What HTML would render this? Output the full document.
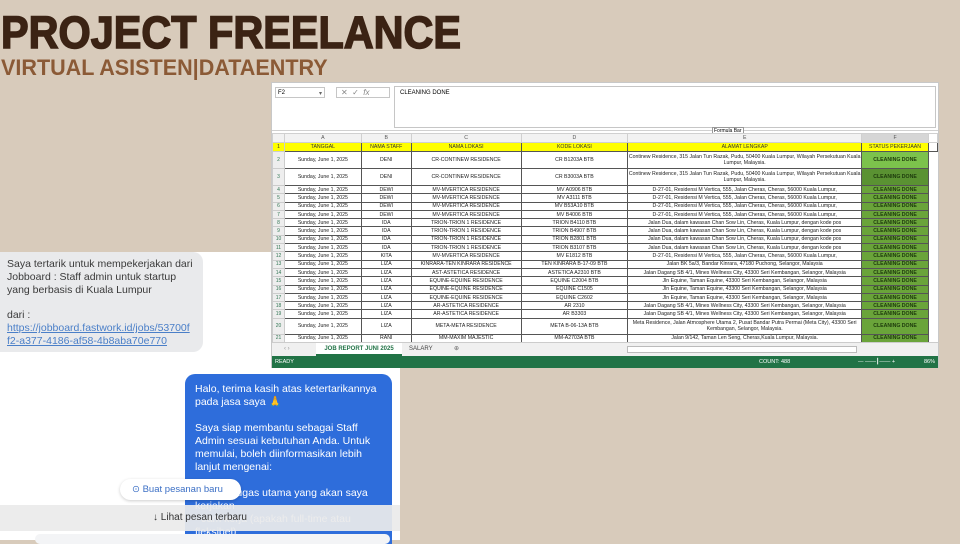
<!DOCTYPE html>
<html><head><meta charset="utf-8"><style>
*{margin:0;padding:0;box-sizing:border-box}
body{width:960px;height:540px;background:#d8cbbb;position:relative;overflow:hidden;font-family:"Liberation Sans",sans-serif}
.t1{position:absolute;left:1px;top:7px;font-size:45px;font-weight:900;color:#3b2314;transform:scaleX(0.92);transform-origin:left;-webkit-text-stroke:1.5px #3b2314;white-space:nowrap}
.t2{position:absolute;left:1px;top:55px;font-size:22px;font-weight:bold;color:#8b5a36;white-space:nowrap;transform:scaleX(0.98);transform-origin:left}
.xl{position:absolute;left:271px;top:82px;width:668px;height:286px;background:#fff;border:1px solid #c8c8c8;z-index:5}
.fb{position:absolute;left:0;top:0;width:666px;height:48px;background:#fff;border-bottom:1px solid #d0d0d0}
.nb{position:absolute;left:3px;top:4px;width:50px;height:11px;border:1px solid #c6c6c6;font-size:6px;padding:2px}
.fx{position:absolute;left:64px;top:4px;width:54px;height:11px;border:1px solid #c6c6c6;font-size:8px;color:#888;padding-left:4px;line-height:10px}
.fi{position:absolute;left:122px;top:3px;width:542px;height:42px;border:1px solid #c6c6c6;font-size:6px;padding:3px 5px}
table{position:absolute;left:0;top:50px;border-collapse:collapse;table-layout:fixed;font-size:5.2px;color:#222}
td{border:1px solid #555;text-align:center;overflow:hidden;white-space:nowrap;line-height:6px;padding:0}
td.n{background:#eee;border-color:#ccc;color:#375;font-size:5px;text-align:center}
tr.ch td{background:#f2f2f2;border-color:#d0d0d0;height:9px;color:#555}
tr.hd td{background:#ffff00;height:9px;color:#333}
td.g{background:#6aa43a;color:#1d3a0c;font-weight:bold}
td.w{white-space:normal}
.tabs{position:absolute;left:0;top:259px;width:666px;height:14px;background:#f0f0f0;border-top:1px solid #ccc;font-size:6px}
.st{position:absolute;left:0;top:273px;width:666px;height:12px;background:#217346;color:#fff;font-size:5.5px;line-height:12px}
.chat{position:absolute;left:0;top:252px;width:400px;height:288px;background:#fff}
.b1{position:absolute;left:0;top:252px;width:203px;height:100px;background:#e9eaec;border-radius:0 10px 10px 0;font-size:10.5px;line-height:12.8px;color:#3a3a3a;padding:6px 7px}
.b1 a{color:#4a7fc8;text-decoration:underline}
.b2{position:absolute;left:185px;top:374px;width:207px;height:170px;background:#2e6ddb;border-radius:10px 10px 0 0;color:#fff;font-size:10.5px;line-height:13px;padding:9px 10px}
.tm{position:absolute;left:364px;top:361px;font-size:8px;color:#999}
.ov{position:absolute;left:0;top:505px;width:400px;height:26px;background:rgba(235,235,235,.93);font-size:10px;color:#333;text-align:center;line-height:26px}
.pill{position:absolute;left:120px;top:479px;width:121px;height:21px;background:#fff;border-radius:11px;box-shadow:0 1px 3px rgba(0,0,0,.2);font-size:9.5px;color:#3b6fc5;line-height:21px;padding-left:12px}
.bot{position:absolute;left:35px;top:534px;width:355px;height:10px;background:#f3f4f6;border-radius:5px}
</style></head><body>
<div class="t1">PROJECT FREELANCE</div>
<div class="t2">VIRTUAL ASISTEN|DATAENTRY</div>

<div class="chat"></div>
<div class="b1">Saya tertarik untuk mempekerjakan dari Jobboard : Staff admin untuk startup yang berbasis di Kuala Lumpur<br><br>dari :<br><a>https://jobboard.fastwork.id/jobs/53700f f2-a377-4186-af58-4b8aba70e770</a></div>
<div class="tm">21:51</div>
<div class="b2">Halo, terima kasih atas ketertarikannya pada jasa saya 🙏<br><br>Saya siap membantu sebagai Staff Admin sesuai kebutuhan Anda. Untuk memulai, boleh diinformasikan lebih lanjut mengenai:<br><br>- Tugas-tugas utama yang akan saya kerjakan<br>- Jam kerja (apakah full-time atau fleksibel)</div>
<div class="ov">↓ Lihat pesan terbaru</div>
<div class="pill">⊙ Buat pesanan baru</div>
<div class="bot"></div>

<div class="xl">
<div class="fb"><div class="nb">F2 <span style="float:right;color:#666">▾</span></div><div class="fx">✕ &nbsp;✓ &nbsp;<i>fx</i></div><div class="fi">CLEANING DONE</div>
<div style="position:absolute;left:440px;top:44px;font-size:5px;border:1px solid #999;background:#fff;padding:0 1px">Formula Bar</div></div>
<table>
<colgroup><col style="width:12px"><col style="width:77px"><col style="width:50px"><col style="width:110px"><col style="width:107px"><col style="width:234px"><col style="width:67px"><col style="width:9px"></colgroup>
<tr class="ch"><td class="n"></td><td>A</td><td>B</td><td>C</td><td>D</td><td>E</td><td style="background:#d6d6d6">F</td><td style="background:#fff"></td></tr>
<tr class="hd"><td class="n">1</td><td>TANGGAL</td><td>NAMA STAFF</td><td>NAMA LOKASI</td><td>KODE LOKASI</td><td>ALAMAT LENGKAP</td><td>STATUS PEKERJAAN</td><td style="background:#fff"></td></tr>
<tr style="height:17px"><td class="n">2</td><td>Sunday, June 1, 2025</td><td>DENI</td><td>CR-CONTINEW RESIDENCE</td><td>CR B1203A BTB</td><td class="w">Continew Residence, 315 Jalan Tun Razak, Pudu, 50400 Kuala Lumpur, Wilayah Persekutuan Kuala Lumpur, Malaysia.</td><td class="g" style="background:#7cc24c">CLEANING DONE</td><td style="border:0"></td></tr>
<tr style="height:17px"><td class="n">3</td><td>Sunday, June 1, 2025</td><td>DENI</td><td>CR-CONTINEW RESIDENCE</td><td>CR B3003A BTB</td><td class="w">Continew Residence, 315 Jalan Tun Razak, Pudu, 50400 Kuala Lumpur, Wilayah Persekutuan Kuala Lumpur, Malaysia.</td><td class="g" style="background:#5a9232">CLEANING DONE</td><td style="border:0"></td></tr>
<tr style="height:8.3px"><td class="n">4</td><td>Sunday, June 1, 2025</td><td>DEWI</td><td>MV-MVERTICA RESIDENCE</td><td>MV A0906 BTB</td><td>D-27-01, Residensi M Vertica, 555, Jalan Cheras, Cheras, 56000 Kuala Lumpur,</td><td class="g">CLEANING DONE</td><td style="border:0"></td></tr>
<tr style="height:8.3px"><td class="n">5</td><td>Sunday, June 1, 2025</td><td>DEWI</td><td>MV-MVERTICA RESIDENCE</td><td>MV A3111 BTB</td><td>D-27-01, Residensi M Vertica, 555, Jalan Cheras, Cheras, 56000 Kuala Lumpur,</td><td class="g">CLEANING DONE</td><td style="border:0"></td></tr>
<tr style="height:8.3px"><td class="n">6</td><td>Sunday, June 1, 2025</td><td>DEWI</td><td>MV-MVERTICA RESIDENCE</td><td>MV B53A10 BTB</td><td>D-27-01, Residensi M Vertica, 555, Jalan Cheras, Cheras, 56000 Kuala Lumpur,</td><td class="g">CLEANING DONE</td><td style="border:0"></td></tr>
<tr style="height:8.3px"><td class="n">7</td><td>Sunday, June 1, 2025</td><td>DEWI</td><td>MV-MVERTICA RESIDENCE</td><td>MV B4006 BTB</td><td>D-27-01, Residensi M Vertica, 555, Jalan Cheras, Cheras, 56000 Kuala Lumpur,</td><td class="g">CLEANING DONE</td><td style="border:0"></td></tr>
<tr style="height:8.3px"><td class="n">8</td><td>Sunday, June 1, 2025</td><td>IDA</td><td>TRION-TRION 1 RESIDENCE</td><td>TRION B4110 BTB</td><td>Jalan Dua, dalam kawasan Chan Sow Lin, Cheras, Kuala Lumpur, dengan kode pos</td><td class="g">CLEANING DONE</td><td style="border:0"></td></tr>
<tr style="height:8.3px"><td class="n">9</td><td>Sunday, June 1, 2025</td><td>IDA</td><td>TRION-TRION 1 RESIDENCE</td><td>TRION B4907 BTB</td><td>Jalan Dua, dalam kawasan Chan Sow Lin, Cheras, Kuala Lumpur, dengan kode pos</td><td class="g">CLEANING DONE</td><td style="border:0"></td></tr>
<tr style="height:8.3px"><td class="n">10</td><td>Sunday, June 1, 2025</td><td>IDA</td><td>TRION-TRION 1 RESIDENCE</td><td>TRION B2801 BTB</td><td>Jalan Dua, dalam kawasan Chan Sow Lin, Cheras, Kuala Lumpur, dengan kode pos</td><td class="g">CLEANING DONE</td><td style="border:0"></td></tr>
<tr style="height:8.3px"><td class="n">11</td><td>Sunday, June 1, 2025</td><td>IDA</td><td>TRION-TRION 1 RESIDENCE</td><td>TRION B3107 BTB</td><td>Jalan Dua, dalam kawasan Chan Sow Lin, Cheras, Kuala Lumpur, dengan kode pos</td><td class="g">CLEANING DONE</td><td style="border:0"></td></tr>
<tr style="height:8.3px"><td class="n">12</td><td>Sunday, June 1, 2025</td><td>KITA</td><td>MV-MVERTICA RESIDENCE</td><td>MV E1812 BTB</td><td>D-27-01, Residensi M Vertica, 555, Jalan Cheras, Cheras, 56000 Kuala Lumpur,</td><td class="g">CLEANING DONE</td><td style="border:0"></td></tr>
<tr style="height:8.3px"><td class="n">13</td><td>Sunday, June 1, 2025</td><td>LIZA</td><td>KINRARA-TEN KINRARA RESIDENCE</td><td>TEN KINRARA B-17-09 BTB</td><td>Jalan BK 5a/3, Bandar Kinrara, 47180 Puchong, Selangor, Malaysia</td><td class="g">CLEANING DONE</td><td style="border:0"></td></tr>
<tr style="height:8.3px"><td class="n">14</td><td>Sunday, June 1, 2025</td><td>LIZA</td><td>AST-ASTETICA RESIDENCE</td><td>ASTETICA A2310 BTB</td><td>Jalan Dagang SB 4/1, Mines Wellness City, 43300 Seri Kembangan, Selangor, Malaysia</td><td class="g">CLEANING DONE</td><td style="border:0"></td></tr>
<tr style="height:8.3px"><td class="n">15</td><td>Sunday, June 1, 2025</td><td>LIZA</td><td>EQUINE-EQUINE RESIDENCE</td><td>EQUINE C2004 BTB</td><td>Jln Equine, Taman Equine, 43300 Seri Kembangan, Selangor, Malaysia</td><td class="g">CLEANING DONE</td><td style="border:0"></td></tr>
<tr style="height:8.3px"><td class="n">16</td><td>Sunday, June 1, 2025</td><td>LIZA</td><td>EQUINE-EQUINE RESIDENCE</td><td>EQUINE C1505</td><td>Jln Equine, Taman Equine, 43300 Seri Kembangan, Selangor, Malaysia</td><td class="g">CLEANING DONE</td><td style="border:0"></td></tr>
<tr style="height:8.3px"><td class="n">17</td><td>Sunday, June 1, 2025</td><td>LIZA</td><td>EQUINE-EQUINE RESIDENCE</td><td>EQUINE C2602</td><td>Jln Equine, Taman Equine, 43300 Seri Kembangan, Selangor, Malaysia</td><td class="g">CLEANING DONE</td><td style="border:0"></td></tr>
<tr style="height:8.3px"><td class="n">18</td><td>Sunday, June 1, 2025</td><td>LIZA</td><td>AR-ASTETICA RESIDENCE</td><td>AR 2310</td><td>Jalan Dagang SB 4/1, Mines Wellness City, 43300 Seri Kembangan, Selangor, Malaysia</td><td class="g">CLEANING DONE</td><td style="border:0"></td></tr>
<tr style="height:8.3px"><td class="n">19</td><td>Sunday, June 1, 2025</td><td>LIZA</td><td>AR-ASTETICA RESIDENCE</td><td>AR B3303</td><td>Jalan Dagang SB 4/1, Mines Wellness City, 43300 Seri Kembangan, Selangor, Malaysia</td><td class="g">CLEANING DONE</td><td style="border:0"></td></tr>
<tr style="height:16px"><td class="n">20</td><td>Sunday, June 1, 2025</td><td>LIZA</td><td>META-META RESIDENCE</td><td>META B-06-13A BTB</td><td class="w">Meta Residence, Jalan Atmosphere Utama 2, Pusat Bandar Putra Permai (Meta City), 43300 Seri Kembangan, Selangor, Malaysia.</td><td class="g">CLEANING DONE</td><td style="border:0"></td></tr>
<tr style="height:8.3px"><td class="n">21</td><td>Sunday, June 1, 2025</td><td>RANI</td><td>MM-MAXIM MAJESTIC</td><td>MM-A2703A BTB</td><td>Jalan 9/142, Taman Len Seng, Cheras,Kuala Lumpur, Malaysia.</td><td class="g">CLEANING DONE</td><td style="border:0"></td></tr>
</table>
<div class="tabs"><span style="position:absolute;left:12px;top:3px;color:#999">‹ ›</span><span style="position:absolute;left:44px;top:0;height:13px;width:86px;background:#fff;border-bottom:2px solid #217346;color:#217346;font-weight:bold;text-align:center;line-height:12px">JOB REPORT JUNI 2025</span><span style="position:absolute;left:137px;top:3px;color:#444">SALARY</span><span style="position:absolute;left:182px;top:2px;color:#666">⊕</span><div style="position:absolute;left:355px;top:3px;width:230px;height:7px;border:1px solid #bbb;background:#fff"></div></div>
<div class="st"><span style="margin-left:3px">READY</span><span style="position:absolute;left:487px">COUNT: 488</span><span style="position:absolute;left:586px">— ——┃—— +</span><span style="position:absolute;left:652px">86%</span></div>
</div>
</body></html>
